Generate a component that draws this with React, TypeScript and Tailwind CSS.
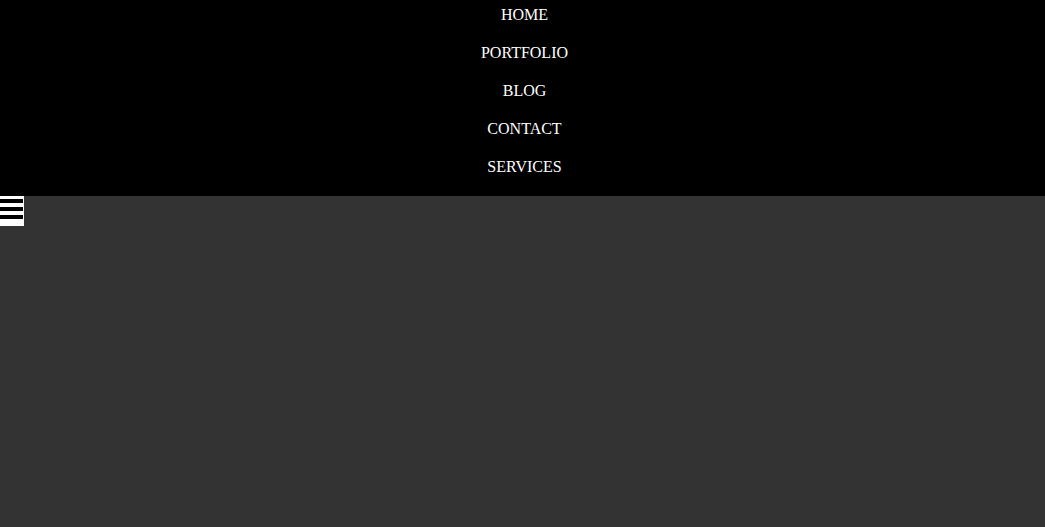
const links = ['HOME', 'PORTFOLIO', 'BLOG', 'CONTACT', 'SERVICES'];

const App = () => {
  return (
    <div className="min-h-screen bg-[#333333] font-['Liberation_Serif',serif]">
      {/* Nav menu */}
      <nav className="bg-black pt-[6px]">
        <ul className="flex flex-col items-center pl-[4px]">
          {links.map((l) => (
            <li key={l} className="h-[38px] text-[16px] leading-[18px] text-white">
              <a href="#">{l}</a>
            </li>
          ))}
        </ul>
      </nav>

      {/* Hamburger toggle */}
      <button className="flex flex-col w-[24px] h-[30px] bg-white pt-[3px] gap-[4px]">
        <span className="block h-[4px] w-[23px] bg-black"></span>
        <span className="block h-[4px] w-[23px] bg-black"></span>
        <span className="block h-[4px] w-[23px] bg-black"></span>
      </button>
    </div>
  );
};

export default App;
